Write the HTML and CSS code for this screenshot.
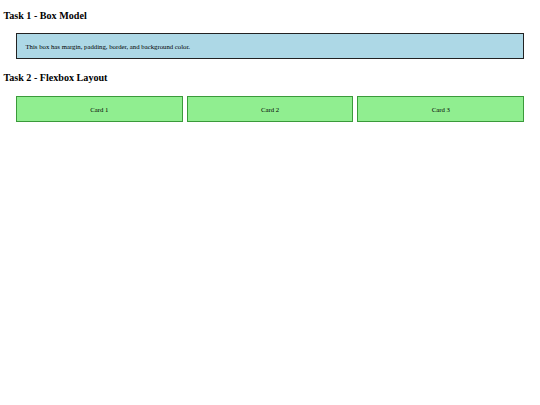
FILE: index.html
```html
<!DOCTYPE html>
<html lang="en">
<head>
  <meta charset="UTF-8" />
  <meta name="viewport" content="width=device-width, initial-scale=1.0"/>
  <title>CSS Tasks</title>
  <link rel="stylesheet" href="styles.css">
</head>
<body>
  <h2>Task 1 - Box Model</h2>
  <div class="box">This box has margin, padding, border, and background color.</div>

  <h2>Task 2 - Flexbox Layout</h2>
  <div class="flex-container">
    <div class="card">Card 1</div>
    <div class="card">Card 2</div>
    <div class="card">Card 3</div>
  </div>
</body>
</html>
```

FILE: styles.css
```css
body {
  margin: 3.375px;
  font-family: "Liberation Serif", "Times New Roman", serif;
  font-size: 6.75px;
  color: #000;
  background: #fff;
}
h2 {
  font-size: 10.125px;
  margin: 6.2px 0 8.4px;
}
.box {
  margin: 12.656px;
  padding: 8.4375px;
  border: 1.5px solid #222;
  background-color: lightblue;
}
.flex-container {
  display: flex;
  gap: 4.22px;
  margin: 13.4px 12.656px;
}
.card {
  flex: 1;
  padding: 8.4375px;
  border: 1px solid #3a9a3a;
  background-color: lightgreen;
  text-align: center;
}
```
